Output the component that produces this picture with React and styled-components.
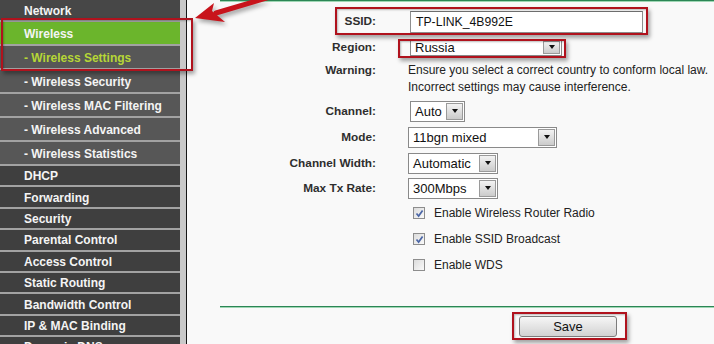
import React from "react"
import styled, { createGlobalStyle } from "styled-components"

const GlobalStyle = createGlobalStyle`
  html, body {
    margin: 0;
    padding: 0;
    background: #f9f9f9;
  }
  body {
    font-family: "Liberation Sans", Arial, sans-serif;
  }
`;

const Page = styled.div`
  position: relative;
  display: flex;
  width: 714px;
  height: 344px;
  overflow: hidden;
  background: #f9f9f9;
`;

const Sidebar = styled.nav`
  width: 180px;
  flex-shrink: 0;
  display: flex;
  flex-direction: column;
  background: #3f3f3f;
`;

const MenuItem = styled.div`
  box-sizing: border-box;
  flex-shrink: 0;
  height: ${p => p.$h}px;
  display: flex;
  align-items: center;
  padding: 1px 0 0 24px;
  border-bottom: 2px solid #a2a2a2;
  font-size: 12px;
  font-weight: bold;
  color: ${p => (p.$current ? "#b6d636" : "#f4f4f4")};
  background: ${p => p.$bg};
  white-space: nowrap;
`;

const Divider = styled.div`
  width: 6px;
  flex-shrink: 0;
  background: #c9c9c9;
  border-right: 1px solid #161616;
`;

const Content = styled.main`
  flex: 1;
  padding-left: 33px;
  display: flex;
  flex-direction: column;
`;

const Rule = styled.div`
  height: 1px;
  border-bottom: 1px solid #9fd7b4;
  background: #2c8655;
  margin-top: ${p => p.$top || 0}px;
`;

const Form = styled.div`
  display: flex;
  flex-direction: column;
  margin-top: 6px;
`;

const Row = styled.div`
  display: grid;
  grid-template-columns: 156px 1fr;
  column-gap: 32px;
  height: ${p => p.$h}px;
  align-items: ${p => (p.$top ? "start" : "center")};
  padding-top: ${p => (p.$top ? 2 : 0)}px;
  box-sizing: border-box;
`;

const Label = styled.div`
  text-align: right;
  font-size: 11.8px;
  font-weight: bold;
  color: #2e2e2e;
  line-height: 17px;
`;

const Note = styled.div`
  font-size: 12px;
  line-height: 17px;
  color: #222;
`;

const TextInput = styled.div`
  box-sizing: border-box;
  width: 233px;
  height: 22px;
  margin: 2px 0 0 2px;
  padding-left: 5px;
  display: flex;
  align-items: center;
  border: 1px solid #8e8e8e;
  border-top-color: #6f6f6f;
  background: #fff;
  font-size: 12.2px;
  color: #111;
`;

const SelectBox = styled.div`
  box-sizing: border-box;
  width: ${p => p.$w}px;
  height: ${p => p.$h}px;
  margin-left: ${p => p.$ml || 0}px;
  display: flex;
  align-items: stretch;
  border: 1px solid #8a8a8a;
  background: #fff;
  font-size: 13px;
  color: #111;
`;

const SelectText = styled.span`
  flex: 1;
  display: flex;
  align-items: center;
  padding-left: 4px;
`;

const SelectArrow = styled.span`
  width: 15px;
  margin: 1px;
  border: 1px solid #9a9a9a;
  background: linear-gradient(#f3f3f3, #cbcbcb);
  display: flex;
  align-items: center;
  justify-content: center;
  &::after {
    content: "";
    border-left: 3.5px solid transparent;
    border-right: 3.5px solid transparent;
    border-top: 4px solid #111;
  }
`;

const CheckLine = styled.label`
  display: flex;
  align-items: center;
  gap: 9px;
  padding-left: 5px;
  font-size: 12px;
  color: #222;
`;

const Box = styled.span`
  box-sizing: border-box;
  width: 12px;
  height: 12px;
  border: 1px solid #8d8d8d;
  background: linear-gradient(135deg, #dcdcdc, #fafafa);
  display: flex;
  align-items: center;
  justify-content: center;
`;

const Footer = styled.div`
  display: flex;
  padding: 8px 0 0 299px;
`;

const Button = styled.button`
  width: 98px;
  height: 21px;
  padding: 0;
  border: 1px solid #7c7c7c;
  border-radius: 3px;
  background: linear-gradient(#f6f6f6, #d2d2d2);
  font-family: "Liberation Sans", Arial, sans-serif;
  font-size: 13px;
  color: #111;
`;

const Mark = styled.div`
  position: absolute;
  left: ${p => p.$x}px;
  top: ${p => p.$y}px;
  width: ${p => p.$w}px;
  height: ${p => p.$h}px;
  box-sizing: border-box;
  border: 2px solid #b0121d;
  box-shadow: 2px 3px 4px rgba(0, 0, 0, 0.35), inset 1px 1px 2px rgba(0, 0, 0, 0.25);
  pointer-events: none;
`;

const Arrow = styled.svg`
  position: absolute;
  left: 180px;
  top: 0;
  filter: drop-shadow(2px 3px 2px rgba(0, 0, 0, 0.35));
`;

const Select = ({ w, h = 21, ml, children }) => (
  <SelectBox $w={w} $h={h} $ml={ml}>
    <SelectText>{children}</SelectText>
    <SelectArrow />
  </SelectBox>
)

const Check = ({ on, children }) => (
  <CheckLine>
    <Box>
      {on && (
        <svg width="9" height="9" viewBox="0 0 9 9">
          <path d="M1.5 4.5 L3.6 7 L7.6 1.5" fill="none" stroke="#4b66a6" strokeWidth="1.7" />
        </svg>
      )}
    </Box>
    {children}
  </CheckLine>
)

const menu = [
  { text: "Network", h: 22, bg: "#474747" },
  { text: "Wireless", h: 24, bg: "#6bb52c" },
  { text: "- Wireless Settings", h: 24, bg: "#575757", current: true },
  { text: "- Wireless Security", h: 24, bg: "#575757" },
  { text: "- Wireless MAC Filtering", h: 24, bg: "#575757" },
  { text: "- Wireless Advanced", h: 24, bg: "#575757" },
  { text: "- Wireless Statistics", h: 24, bg: "#575757" },
  { text: "DHCP", h: 21.4, bg: "#3f3f3f" },
  { text: "Forwarding", h: 21.4, bg: "#3f3f3f" },
  { text: "Security", h: 21.4, bg: "#3f3f3f" },
  { text: "Parental Control", h: 21.4, bg: "#3f3f3f" },
  { text: "Access Control", h: 21.4, bg: "#3f3f3f" },
  { text: "Static Routing", h: 21.4, bg: "#3f3f3f" },
  { text: "Bandwidth Control", h: 21.4, bg: "#3f3f3f" },
  { text: "IP & MAC Binding", h: 21.4, bg: "#3f3f3f" },
  { text: "Dynamic DNS", h: 21.4, bg: "#3f3f3f" },
]

export default function App() {
  return (
    <Page>
      <GlobalStyle />
      <Sidebar>
        {menu.map(item => (
          <MenuItem key={item.text} $h={item.h} $bg={item.bg} $current={item.current}>
            {item.text}
          </MenuItem>
        ))}
      </Sidebar>
      <Divider />
      <Content>
        <Rule />
        <Form>
          <Row $h={26}>
            <Label>SSID:</Label>
            <TextInput>TP-LINK_4B992E</TextInput>
          </Row>
          <Row $h={26}>
            <Label>Region:</Label>
            <Select w={152} h={17} ml={2}>Russia</Select>
          </Row>
          <Row $h={38} $top>
            <Label>Warning:</Label>
            <Note>
              Ensure you select a correct country to conform local law.
              <br />
              Incorrect settings may cause interference.
            </Note>
          </Row>
          <Row $h={26}>
            <Label>Channel:</Label>
            <Select w={55} ml={2}>Auto</Select>
          </Row>
          <Row $h={26}>
            <Label>Mode:</Label>
            <Select w={149}>11bgn mixed</Select>
          </Row>
          <Row $h={26}>
            <Label>Channel Width:</Label>
            <Select w={90}>Automatic</Select>
          </Row>
          <Row $h={24}>
            <Label>Max Tx Rate:</Label>
            <Select w={90}>300Mbps</Select>
          </Row>
          <Row $h={26}>
            <span />
            <Check on>Enable Wireless Router Radio</Check>
          </Row>
          <Row $h={26}>
            <span />
            <Check on>Enable SSID Broadcast</Check>
          </Row>
          <Row $h={26}>
            <span />
            <Check>Enable WDS</Check>
          </Row>
        </Form>
        <Rule $top={28} />
        <Footer>
          <Button>Save</Button>
        </Footer>
      </Content>

      <Mark $x={1} $y={18} $w={192} $h={53} />
      <Mark $x={335} $y={7} $w={313} $h={28} />
      <Mark $x={398} $y={39} $w={168} $h={19} />
      <Mark $x={512} $y={312} $w={115} $h={28} />

      <Arrow width="110" height="40" viewBox="0 0 110 40">
        <path d="M36 13 L100 -6" stroke="#c8141c" strokeWidth="5" strokeLinecap="round" />
        <polygon points="15,18 34,3 32,11 45,22" fill="#c8141c" />
      </Arrow>
    </Page>
  )
}
